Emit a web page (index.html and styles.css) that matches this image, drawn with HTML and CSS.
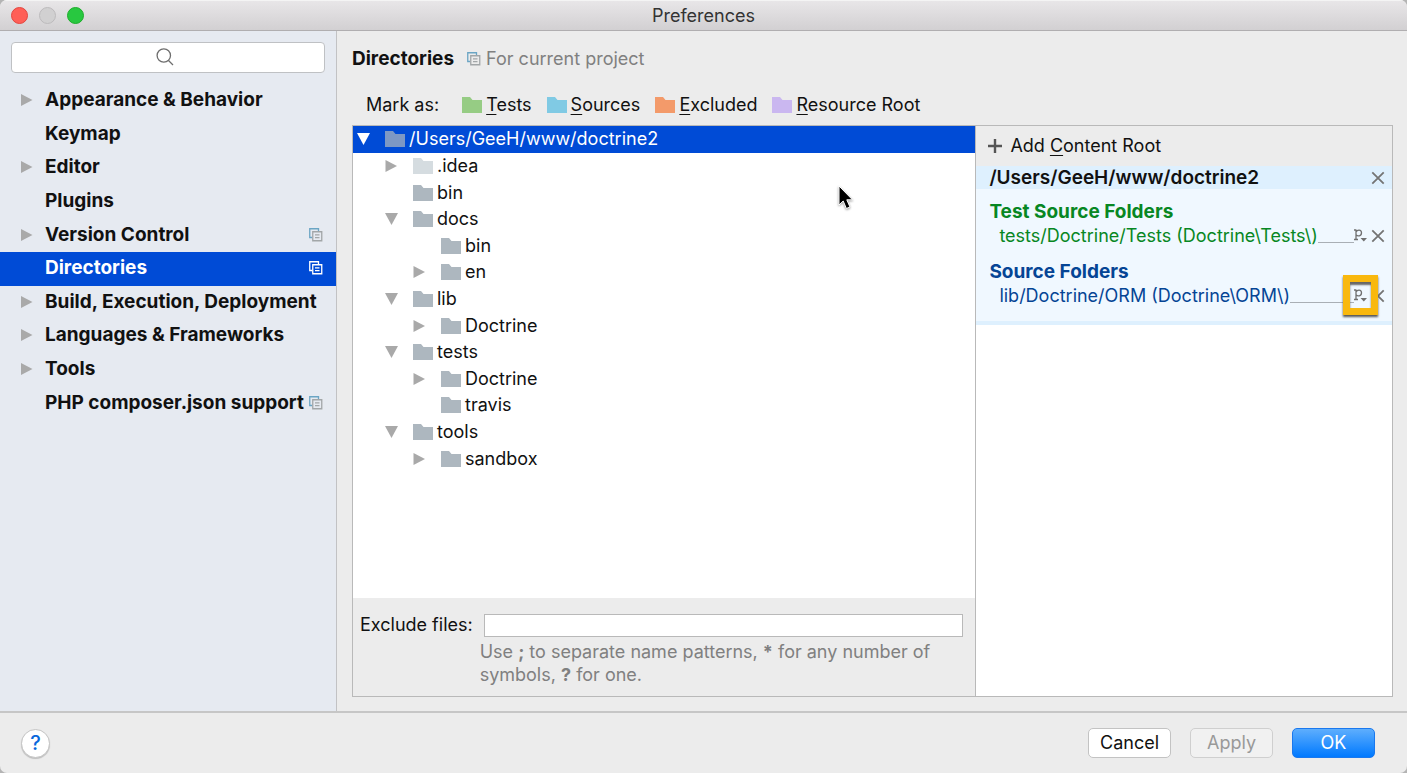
FILE: index.html
```html
<!DOCTYPE html>
<html lang="en">
<head>
<meta charset="utf-8">
<title>Preferences</title>
<link rel="stylesheet" href="styles.css">
</head>
<body>
<svg class="defs" aria-hidden="true">
  <symbol id="folder" viewBox="0 0 20 16"><path d="M0 0H8L10.500 3H20V16H0Z"/></symbol>
  <symbol id="right" viewBox="0 0 12 12"><path d="M0 0L11.500 6L0 12Z"/></symbol>
  <symbol id="down" viewBox="0 0 13 12"><path d="M0 0H13L6.500 12Z"/></symbol>
  <symbol id="scope" viewBox="0 0 14 14"><path class="back" d="M3 9.500H.750V.750H9.500V3"/><path class="front" d="M3.750 3.750H12.750V12.750H3.750ZM6 6.800H10.500M6 9.700H10.500"/></symbol>
  <symbol id="cross" viewBox="0 0 14 14"><path d="M1.300 1.300L12.700 12.700M12.700 1.300L1.300 12.700"/></symbol>
  <symbol id="prefix" viewBox="0 0 14 16"><path class="stroke" d="M2 1.500V11.500M0 2H2M0 11.500H4M2 4C3 1.500 7.500 1 7.500 4.800C7.500 8.500 3.500 8.500 2 6.800"/><path class="fill" d="M6.500 10H13L9.800 13.500Z"/></symbol>
</svg>
<div class="window">
  <header class="titlebar">
    <div class="lights">
      <button class="light close" aria-label="Close"></button>
      <button class="light minimize" aria-label="Minimize" disabled></button>
      <button class="light expand" aria-label="Zoom"></button>
    </div>
    <h1>Preferences</h1>
  </header>
  <div class="body">
    <nav class="sidebar" aria-label="Preference sections">
      <div class="search">
        <input type="search" aria-label="Search preferences">
        <svg class="search-icon" viewBox="0 0 18 18" aria-hidden="true"><circle cx="7.800" cy="7.500" r="6.700"/><path d="M12.500 12.500L17 17"/></svg>
      </div>
      <ul class="sections">
        <li><svg class="arrow"><use href="#right"/></svg><a href="#appearance">Appearance &amp; Behavior</a></li>
        <li><a href="#keymap">Keymap</a></li>
        <li><svg class="arrow"><use href="#right"/></svg><a href="#editor">Editor</a></li>
        <li><a href="#plugins">Plugins</a></li>
        <li><svg class="arrow"><use href="#right"/></svg><a href="#vcs">Version Control</a><svg class="scope"><use href="#scope"/></svg></li>
        <li class="selected"><a href="#directories" aria-current="page">Directories</a><svg class="scope"><use href="#scope"/></svg></li>
        <li><svg class="arrow"><use href="#right"/></svg><a href="#build">Build, Execution, Deployment</a></li>
        <li><svg class="arrow"><use href="#right"/></svg><a href="#languages">Languages &amp; Frameworks</a></li>
        <li><svg class="arrow"><use href="#right"/></svg><a href="#tools">Tools</a></li>
        <li><a href="#composer">PHP composer.json support</a><svg class="scope"><use href="#scope"/></svg></li>
      </ul>
    </nav>
    <main class="content">
      <div class="heading"><h2>Directories</h2><svg class="scope"><use href="#scope"/></svg><span>For current project</span></div>
      <div class="marks">
        <span class="marks-label">Mark as:</span>
        <button class="mark tests"><svg class="folder"><use href="#folder"/></svg><span><u>T</u>ests</span></button>
        <button class="mark sources"><svg class="folder"><use href="#folder"/></svg><span><u>S</u>ources</span></button>
        <button class="mark excluded"><svg class="folder"><use href="#folder"/></svg><span><u>E</u>xcluded</span></button>
        <button class="mark resource"><svg class="folder"><use href="#folder"/></svg><span><u>R</u>esource Root</span></button>
      </div>
      <div class="panels">
        <section class="files">
          <div class="tree-area">
            <ul class="tree" role="tree" aria-label="Project directories">
              <li class="selected" role="treeitem" aria-level="1" aria-expanded="true"><svg class="arrow"><use href="#down"/></svg><svg class="folder"><use href="#folder"/></svg>/Users/GeeH/www/doctrine2</li>
              <li class="level-2 hidden-dir" role="treeitem" aria-level="2" aria-expanded="false"><svg class="arrow closed"><use href="#right"/></svg><svg class="folder"><use href="#folder"/></svg>.idea</li>
              <li class="level-2 leaf" role="treeitem" aria-level="2"><svg class="folder"><use href="#folder"/></svg>bin</li>
              <li class="level-2" role="treeitem" aria-level="2" aria-expanded="true"><svg class="arrow"><use href="#down"/></svg><svg class="folder"><use href="#folder"/></svg>docs</li>
              <li class="level-3 leaf" role="treeitem" aria-level="3"><svg class="folder"><use href="#folder"/></svg>bin</li>
              <li class="level-3" role="treeitem" aria-level="3" aria-expanded="false"><svg class="arrow closed"><use href="#right"/></svg><svg class="folder"><use href="#folder"/></svg>en</li>
              <li class="level-2" role="treeitem" aria-level="2" aria-expanded="true"><svg class="arrow"><use href="#down"/></svg><svg class="folder"><use href="#folder"/></svg>lib</li>
              <li class="level-3" role="treeitem" aria-level="3" aria-expanded="false"><svg class="arrow closed"><use href="#right"/></svg><svg class="folder"><use href="#folder"/></svg>Doctrine</li>
              <li class="level-2" role="treeitem" aria-level="2" aria-expanded="true"><svg class="arrow"><use href="#down"/></svg><svg class="folder"><use href="#folder"/></svg>tests</li>
              <li class="level-3" role="treeitem" aria-level="3" aria-expanded="false"><svg class="arrow closed"><use href="#right"/></svg><svg class="folder"><use href="#folder"/></svg>Doctrine</li>
              <li class="level-3 leaf" role="treeitem" aria-level="3"><svg class="folder"><use href="#folder"/></svg>travis</li>
              <li class="level-2" role="treeitem" aria-level="2" aria-expanded="true"><svg class="arrow"><use href="#down"/></svg><svg class="folder"><use href="#folder"/></svg>tools</li>
              <li class="level-3" role="treeitem" aria-level="3" aria-expanded="false"><svg class="arrow closed"><use href="#right"/></svg><svg class="folder"><use href="#folder"/></svg>sandbox</li>
            </ul>
            <svg class="pointer" viewBox="0 0 18 26" aria-hidden="true"><path d="M2 1V20L6.200 16L9.400 23.500L13 22L9.800 14.800H15.500Z"/></svg>
          </div>
          <div class="exclude">
            <label for="exclude">Exclude files:</label>
            <input id="exclude" type="text" aria-describedby="exclude-hint">
            <p id="exclude-hint">Use <b>;</b> to separate name patterns, <b>*</b> for any number of symbols, <b>?</b> for one.</p>
          </div>
        </section>
        <section class="roots" aria-label="Content roots">
          <button class="add-root"><svg viewBox="0 0 14 14" aria-hidden="true"><path d="M7 0V14M0 7H14"/></svg><span>Add <u>C</u>ontent Root</span></button>
          <div class="root-title"><h3>/Users/GeeH/www/doctrine2</h3><button class="icon-button" aria-label="Remove content root"><svg class="cross"><use href="#cross"/></svg></button></div>
          <div class="root-folders">
            <div class="group test-group">
              <h4>Test Source Folders</h4>
              <div class="entry"><a href="#tests">tests/Doctrine/Tests (Doctrine\Tests\)</a><span class="rule"></span>
                <button class="icon-button" aria-label="Edit package prefix"><svg class="prefix"><use href="#prefix"/></svg></button>
                <button class="icon-button remove" aria-label="Remove folder"><svg class="cross"><use href="#cross"/></svg></button></div>
            </div>
            <div class="group source-group">
              <h4>Source Folders</h4>
              <div class="entry"><a href="#lib">lib/Doctrine/ORM (Doctrine\ORM\)</a><span class="rule"></span>
                <button class="icon-button marked" aria-label="Edit package prefix"><svg class="prefix"><use href="#prefix"/></svg></button>
                <button class="icon-button remove" aria-label="Remove folder"><svg class="cross"><use href="#cross"/></svg></button></div>
            </div>
          </div>
        </section>
      </div>
    </main>
  </div>
  <footer class="footer">
    <button class="help" aria-label="Help">?</button>
    <div class="actions">
      <button class="push">Cancel</button>
      <button class="push" disabled>Apply</button>
      <button class="push primary">OK</button>
    </div>
  </footer>
</div>
</body>
</html>
```
FILE: styles.css
```css
* { box-sizing: border-box; }
body {
  margin: 0;
  background: #b4b4b4;
  color: #111;
  font: 18px/24px Inter, "Liberation Sans", sans-serif;
}
h1, h2, h3, h4, p, ul { margin: 0; padding: 0; font-size: inherit; }
h2, h3, h4 { font-size: 19px; }
ul { list-style: none; }
a { color: inherit; text-decoration: none; }
button, input { font: inherit; color: inherit; }
button { padding: 0; border: 0; background: none; }
svg { flex: none; }
u { text-underline-offset: 3px; text-decoration-thickness: 1px; text-decoration-skip-ink: none; }
.defs { position: absolute; width: 0; height: 0; }

.window {
  display: flex;
  flex-direction: column;
  min-height: 100vh;
  border-radius: 7px;
  overflow: hidden;
  background: #ececec;
}
.titlebar {
  display: grid;
  grid-template-columns: 1fr auto 1fr;
  align-items: center;
  height: 31px;
  padding: 0 11px;
  border-top: 1px solid #f4f4f4;
  border-bottom: 1px solid #b0aeb0;
  background: linear-gradient(#e8e6e8, #d2d0d2);
}
.titlebar h1 { padding-top: 1px; font-weight: 400; color: #333; }
.lights { display: flex; gap: 11px; }
.light { width: 17px; height: 17px; border-radius: 50%; border: 1px solid #e2463f; background: #ff5f57; }
.minimize { border-color: #bcbabc; background: #d1d0d1; }
.expand { border-color: #1dad2b; background: #28c840; }

.body { display: flex; flex: 1; }
.sidebar { width: 337px; flex: none; border-right: 1px solid #c2c2c4; background: #e6eaf1; }
.search { position: relative; margin: 11px 11px 11px; }
.search input {
  display: block;
  width: 100%;
  height: 31px;
  border: 1px solid #bfc1c4;
  border-radius: 4px;
  background: #fff;
}
.search-icon { position: absolute; left: calc(50% - 12px); top: 6px; width: 18px; height: 18px; fill: none; stroke: #6e6e6e; stroke-width: 1.3; }
.sections { display: grid; grid-auto-rows: 1fr; height: 336px; font-size: 19px; font-weight: 700; }
.sections li { display: flex; align-items: center; padding: 0 13px 1px 45px; white-space: nowrap; }
.sections .arrow { margin-left: -24px; margin-right: 12px; }
.arrow { width: 12px; height: 12px; fill: #a9a9a9; }
.scope { width: 14px; height: 14px; fill: none; stroke: #a2a6a8; stroke-width: 1.3; }
.scope .back, #scope .back { stroke: var(--back, #6ba5c4); }
.sections .scope { margin-left: auto; }
.selected { background: #004bd6; color: #fff; }
.selected .scope { --back: #fff; stroke: #fff; }

.content { display: flex; flex: 1; flex-direction: column; min-width: 0; padding: 16px 14px 14px 15px; }
.heading { display: flex; align-items: center; color: #808080; }
.heading h2 { color: #111; margin-right: 13px; }
.heading .scope { margin-right: 5px; }
.marks { display: flex; align-items: center; margin: 22px 0 8px 14px; }
.marks-label { margin-right: 23px; }
.mark { display: flex; align-items: center; gap: 4px; margin-right: 15px; }
.folder { width: 20px; height: 16px; fill: #adb7bf; }
.tests .folder { fill: #96cc84; }
.sources .folder { fill: #80cae4; }
.excluded .folder { fill: #f39a6a; }
.resource .folder { fill: #cab7f0; }

.panels { display: grid; grid-template-columns: 3fr 2fr; flex: 1; border: 1px solid #b9b9b9; }
.files { display: flex; flex-direction: column; min-width: 0; border-right: 1px solid #b9b9b9; }
.tree-area { position: relative; flex: 1; background: #fff; }
.tree { display: grid; grid-auto-rows: 1fr; height: 346px; }
.tree li { display: flex; align-items: center; padding-left: 4px; }
.tree .level-2 { padding-left: 32px; }
.tree .level-3 { padding-left: 60px; }
.tree .leaf::before { content: ""; width: 28px; }
.tree .arrow { width: 13px; margin-right: 15px; }
.tree .folder { margin-right: 4px; }
.tree .selected .arrow { fill: #fff; }
.tree .selected .folder { fill: #7d98c4; }
.hidden-dir .folder { fill: #d5dce0; }
.pointer { position: absolute; left: 484px; top: 59px; width: 18px; height: 26px; fill: #000; stroke: #fff; stroke-width: 1; filter: drop-shadow(0 1px 1px #0006); }

.exclude { display: grid; grid-template-columns: auto 1fr; column-gap: 11px; align-items: center; padding: 15px 12px 10px 7px; }
.exclude input { width: 100%; height: 23px; padding: 0 4px; border: 1px solid #b9b9b9; background: #fff; }
.exclude p { grid-column: 2; margin: 3px 0 0 -4px; line-height: 23px; color: #808080; }

.roots { min-width: 0; background: #fff; }
.add-root { display: flex; align-items: center; gap: 8px; width: 100%; height: 40px; padding-left: 12px; background: #ececec; text-align: left; }
.add-root svg { width: 14px; height: 14px; stroke: #555; stroke-width: 2.4; }
.root-title { display: flex; align-items: center; justify-content: space-between; height: 23px; padding: 0 7px 0 13px; background: #def0fe; }
.root-title h3 { font-weight: 600; }
.root-folders { display: grid; gap: 12px; padding: 11px 7px 13px 13px; border-bottom: 4px solid #def0fe; background: #f0f8ff; }
.test-group { color: #078723; }
.source-group { color: #054595; }
.entry { display: flex; align-items: center; padding-left: 10px; white-space: nowrap; }
.rule { flex: 1; align-self: flex-end; margin-bottom: 5px; border-bottom: 1px solid #a9afb5; }
.icon-button { display: flex; position: relative; }
.remove { margin-left: 3px; }
.cross { width: 14px; height: 14px; fill: none; stroke: #747474; stroke-width: 1.8; }
.prefix { width: 14px; height: 16px; fill: #707070; stroke: #707070; stroke-width: 1.3; }
#prefix .stroke { fill: none; }
#prefix .fill { stroke: none; }
.marked::after { content: ""; position: absolute; z-index: 1; inset: -13px -10px -11px -11px; border: 7px solid #f9b80e; box-shadow: 0 2px 2px #555, inset 0 3px 2px #666; }

.footer { display: flex; align-items: center; justify-content: space-between; height: 62px; padding: 0 32px 0 21px; border-top: 2px solid #c6c6c6; }
.help { width: 29px; height: 29px; border: 1px solid #c4c4c4; border-radius: 50%; background: #fff; box-shadow: 0 1px 1px #0003; color: #0868dc; font-size: 20px; font-weight: 500; }
.actions { display: flex; gap: 19px; }
.push { width: 83px; height: 30px; border: 1px solid #c3c3c3; border-radius: 5px; background: #fff; color: #111; }
.push:disabled { border-color: #cfcfcf; background: #f1f1f1; color: #999; }
.primary { border-color: #1a78ee; background: linear-gradient(#5eaefd, #0079ff); color: #fff; }
```
